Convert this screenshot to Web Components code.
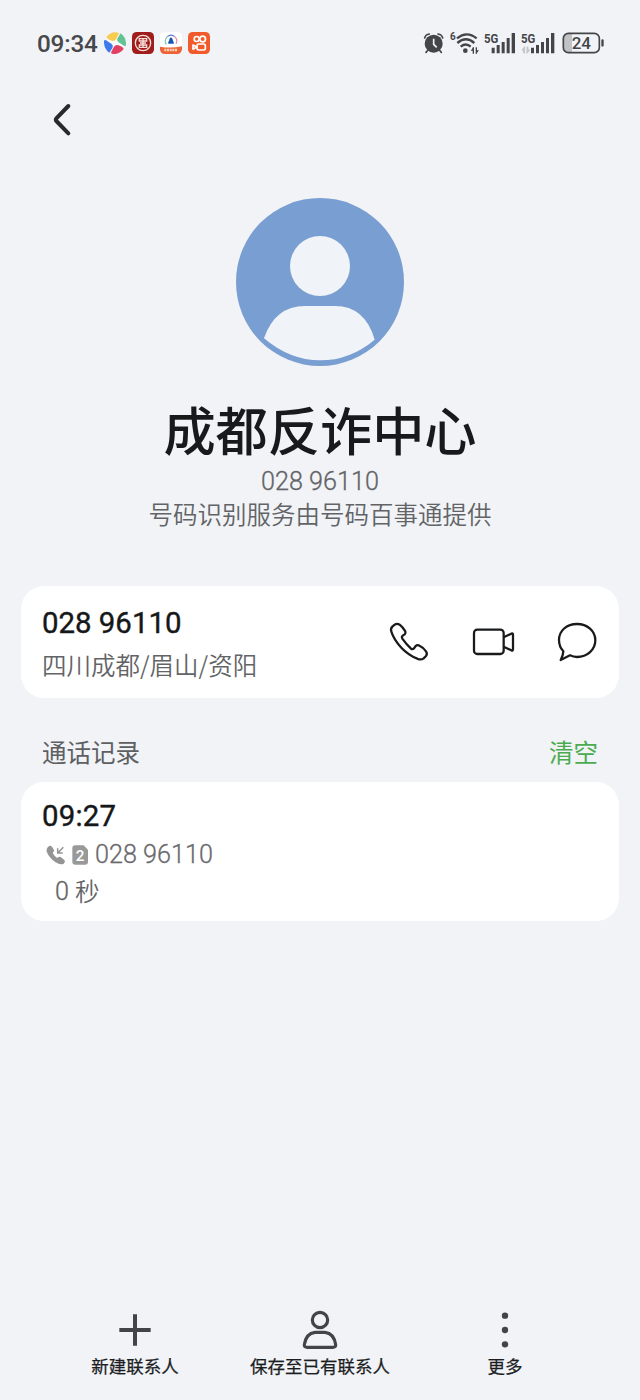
<!DOCTYPE html>
<html lang="zh-CN">
<head>
<meta charset="utf-8">
<title>联系人详情</title>
<style>
html,body{margin:0;padding:0;background:#f1f3f7}
body{width:640px;height:1400px;overflow:hidden}
</style>
</head>
<body>
<contact-page></contact-page>
<script>
const BASE = `*{box-sizing:border-box}svg{display:block;flex:none}
.n{font-family:Roboto,"Noto Sans CJK SC",sans-serif}
.c{font-family:"Noto Sans CJK SC",sans-serif}`;
function define(name, css, html) {
  const t = document.createElement('template');
  t.innerHTML = `<style>${BASE}${css}</style>${html}`;
  customElements.define(name, class extends HTMLElement {
    constructor() {
      super();
      this.attachShadow({mode: 'open'}).append(t.content.cloneNode(true));
    }
  });
}

define('status-bar', `
:host{display:flex;height:86px;padding:0 35px 0 37px;align-items:center}
time{width:67px;padding-top:1px;font-size:24.3px;font-weight:500;color:#47484b;line-height:30px;letter-spacing:-.2px}
.apps{display:flex;gap:6px}
.sys{display:flex;margin-left:auto;gap:4px;color:#444548}
.sys svg:last-child{margin-left:1px}
text{font-family:Roboto,sans-serif;font-weight:700}
`, `
<time class="n">09:34</time>
<div class="apps">
<svg width="22" height="22" viewBox="0 0 66 66"><circle cx="33" cy="33" r="25" fill="#f8fafc"/><path d="M7 15Q22-4 43 2Q46 3 44 6L36 22Q31 29 23 26Q10 22 7 15Z" fill="#f7cc50"/><path d="M50 4Q67 16 66 39Q64 44 60 41L44 31Q37 26 41 18Z" fill="#62c393"/><path d="M59 51Q44 70 24 65Q20 63 22 59L30 44Q35 37 43 40Q56 44 59 51Z" fill="#e33f61"/><path d="M16 62Q-1 50 0 27Q2 22 6 25L22 35Q29 40 25 48Z" fill="#3f79ee"/></svg>
<svg width="22" height="22" viewBox="0 0 66 66"><rect width="66" height="66" rx="14" fill="#9f1d1c"/><g fill="none" stroke="#f8dfd7" stroke-width="4"><circle cx="33" cy="33" r="23"/><path d="M22 20H44V27H22ZM22 46H44V39H22ZM33 20V46M24 33H42"/></g></svg>
<svg width="22" height="22" viewBox="0 0 66 66"><rect width="66" height="66" rx="14" fill="#fff"/><g fill="none" stroke-width="3.500"><path d="M19 37A17 17 0 0 1 22 14" stroke="#7bc9a3"/><path d="M22 14A17 17 0 0 1 44 14" stroke="#536ed1"/><path d="M44 14A17 17 0 0 1 48 35" stroke="#e985a5"/></g><path d="M33 16Q28 19 27 26Q23 31 25 35H41Q43 31 39 26Q38 19 33 16Z" fill="#1756b4"/><path d="M0 44Q33 50 66 43V52Q64 66 52 66H14Q3 66 0 53Z" fill="#eb6337"/><path d="M13 54H53" stroke="#ffd4b4" stroke-width="7" stroke-dasharray="6 2"/></svg>
<svg width="22" height="22" viewBox="0 0 66 66"><rect width="66" height="66" rx="14" fill="#f15b2c"/><g fill="none" stroke="#fff" stroke-width="5" stroke-linejoin="round"><circle cx="26" cy="21" r="7.500"/><circle cx="44" cy="21" r="8.500"/><rect x="27" y="36" width="25" height="18" rx="5"/><path d="M26 45L15 39V52Z"/></g></svg>
</div>
<div class="sys">
<svg width="22" height="24" viewBox="39 33 66 72" fill="none" stroke="currentColor"><circle cx="71" cy="71" r="27" fill="currentColor" stroke="none"/><path d="M44 54Q46 44 58 42M84 42Q96 44 98 54M54 90L48 97M88 90L94 97" stroke-width="5" stroke-linecap="round"/><path d="M71 56V73L80 82" stroke="#f1f3f7" stroke-width="5"/></svg>
<svg width="30" height="24" viewBox="117 33 90 72" fill="none" stroke="currentColor" stroke-width="7"><text x="120" y="60" font-size="33" textLength="17" lengthAdjust="spacingAndGlyphs" fill="currentColor" stroke="none">6</text><path d="M141 55Q170 31 200 55M142 69Q168 47 193 69M152 80Q168 67 182 80"/><circle cx="166" cy="92" r="7" fill="currentColor" stroke="none"/><path d="M190 82V101M199 82V101" stroke-width="4"/><path d="M182 92L190 82V92ZM207 91L199 101V91Z" fill="currentColor" stroke="none"/></svg>
<svg width="33" height="24" viewBox="219 33 99 72" fill="currentColor"><text x="222" y="68" font-size="41" textLength="43" lengthAdjust="spacingAndGlyphs">5G</text><path d="M245 83h9v17h-9zM260 75h9v25h-9zM275 66h9v34h-9zM290 54h9v46h-9zM305 39h10v61h-10z"/></svg>
<svg width="37" height="24" viewBox="330 33 111 72" fill="currentColor"><text x="333" y="68" font-size="41" textLength="43" lengthAdjust="spacingAndGlyphs">5G</text><path d="M363 83h9v17h-9zM378 75h9v25h-9zM393 66h9v34h-9zM408 54h9v46h-9zM423 39h10v61h-10z"/><path d="M336 90L344 80V99H341V90ZM359 90L351 100V81H354V90Z" fill="#c3c4c8" stroke="#c3c4c8" stroke-width="3"/></svg>
<svg width="43" height="24" viewBox="456 33 129 72"><path d="M486 41H474Q461 41 461 54V84Q461 97 474 97H486Z" fill="#c1c2c6"/><rect x="460" y="40" width="108" height="58" rx="15" fill="none" stroke="currentColor" stroke-width="5"/><rect x="574" y="58" width="7" height="22" rx="3.5" fill="currentColor"/><text x="514" y="87" text-anchor="middle" font-size="51" fill="currentColor" style="font-weight:500">24</text></svg>
</div>`);

define('top-bar', `:host{display:flex;height:68px;padding:0 43px;align-items:center}`,
`<svg width="40" height="40" viewBox="39 30 120 120" fill="none" stroke="#28292c" stroke-width="12" stroke-linecap="round" stroke-linejoin="round"><path d="M115 48L79 85Q76 89 79 93L115 130"/></svg>`);

define('contact-hero', `
:host{display:flex;flex-direction:column;align-items:center;padding-top:44px}
h1{margin:32px 0 0;font-size:52.2px;line-height:60px;font-weight:500;color:#18191b}
.num{margin-top:9px;font-size:25.2px;line-height:30px;font-weight:300;-webkit-text-stroke:.3px;color:#626366}
.src{margin-top:2px;font-size:24.5px;line-height:30px;font-weight:350;color:#626366}
`, `
<svg width="168" height="168" viewBox="48 39 504 504"><circle cx="300" cy="291" r="252" fill="#799ed1"/><circle cx="300" cy="243" r="90" fill="#f0f4f9"/><path d="M132 460Q165 363 255 363H345Q435 363 464 464Q390 526 300 526Q210 526 132 460Z" fill="#f0f4f9"/></svg>
<h1 class="c"><slot name="name"></slot></h1>
<div class="num n"><slot name="number"></slot></div>
<div class="src c"><slot name="source"></slot></div>`);

define('phone-card', `
:host{display:flex;height:112px;margin:57px 21px 0;padding:0 20px 0 21px;border-radius:23px;background:#fff;align-items:center;justify-content:space-between}
.info{padding-top:3px}
.num{font-size:29.4px;line-height:36px;font-weight:400;-webkit-text-stroke:.4px;color:#161718}
.loc{font-size:24.5px;line-height:34px;margin-top:7px;font-weight:340;color:#636466}
.actions{display:flex;gap:40px}
`, `
<div class="info"><div class="num n"><slot name="number"></slot></div><div class="loc c"><slot name="place"></slot></div></div>
<div class="actions">
<svg width="44" height="44" viewBox="51 135 132 132" fill="none" stroke="#191a1c" stroke-width="6.8" stroke-linejoin="round"><path d="M67 155L74 149Q81 144 89 149Q99 157 106 169Q108 174 104 178L98 182Q94 186 97 191Q109 208 123 221Q128 224 132 220L137 213Q141 209 146 211Q159 217 168 229Q173 236 168 243L161 250Q153 256 142 251Q115 240 94 218Q72 195 64 170Q61 161 67 155Z"/></svg>
<svg width="44" height="44" viewBox="303 135 132 132" fill="none" stroke="#191a1c" stroke-width="6.8" stroke-linejoin="round"><rect x="312" y="164" width="89" height="73" rx="10"/><path d="M401 187L424 176Q429 174 429 179V223Q429 228 424 226L401 215"/></svg>
<svg width="44" height="44" viewBox="555 135 132 132" fill="none" stroke="#191a1c" stroke-width="6.8" stroke-linejoin="round"><path d="M580 229Q567 215 567 195C567 167 590 147 621 147S676 168 676 196S652 246 621 246Q610 246 600 241L572 255Q579 243 580 229Z"/></svg>
</div>`);

define('section-header', `
:host{display:flex;justify-content:space-between;margin:37px 42px 0;font-size:24.5px;line-height:34px;color:#5e5f63}
.a{color:#4aab50}`, `<span class="c"><slot></slot></span><span class="a c"><slot name="action"></slot></span>`);

define('call-record', `
:host{display:block;height:139px;margin:13px 21px 0;padding:16px 21px 0;border-radius:23px;background:#fff}
.t{font-size:29.4px;line-height:36px;font-weight:400;-webkit-text-stroke:.4px;color:#161718;letter-spacing:.2px}
.r{display:flex;align-items:center;height:30px;margin-top:6px;font-size:25.2px;line-height:30px;font-weight:300;-webkit-text-stroke:.3px;color:#69696c}
.r svg{margin-left:4px;-webkit-text-stroke:0}.r svg+svg{margin:0 6px 0 6px}
.d{display:flex;align-items:center;gap:6px;margin-top:6px;padding-left:13px;height:30px;line-height:30px;font-size:25.2px;color:#626365}
.d .n{font-weight:300;-webkit-text-stroke:.3px;padding-top:1px}
.d .c{font-size:24.5px;font-weight:350}
`, `
<div class="t n"><slot name="time"></slot></div>
<div class="r n">
<svg width="20" height="20" viewBox="108 372 60 60"><path d="M112 380Q119 371 126 377L132 387Q133 392 128 396Q133 406 142 411Q148 405 153 409L163 417Q167 422 161 428Q151 433 137 424Q118 411 110 392Q109 384 112 380Z" fill="#949494"/><path d="M160 379L143 396M143 382V396H158" fill="none" stroke="#949494" stroke-width="4.5"/></svg>
<svg width="17" height="20" viewBox="187 372 51 60"><path d="M197 373H222L235 386V422Q235 431 226 431H197Q188 431 188 422V382Q188 373 197 373Z" fill="#999"/><text x="211.500" y="419" text-anchor="middle" font-family="Roboto,sans-serif" font-weight="500" font-size="46" fill="#fff">2</text></svg>
<span><slot name="number"></slot></span></div>
<div class="d"><span class="n"><slot name="amount"></slot></span><span class="c"><slot name="unit"></slot></span></div>`);

define('nav-item', `
:host{display:flex;flex-direction:column;align-items:center;width:185px}
.l{margin-top:2px;font-size:17.5px;line-height:24px;font-weight:400;-webkit-text-stroke:.25px;color:#1c1d1f;white-space:nowrap}`,
`<slot name="icon"></slot><div class="l c"><slot></slot></div>`);

define('bottom-nav', `:host{display:flex;justify-content:center;margin-top:auto;padding-bottom:22px}`, `
<nav-item><svg slot="icon" width="44" height="44" viewBox="129 39 132 132"><path d="M195 58V152M148 105H242" stroke="#434447" stroke-width="12"/></svg>新建联系人</nav-item>
<nav-item><svg slot="icon" width="44" height="44" viewBox="684 39 132 132" fill="none" stroke="#434447" stroke-width="9.500"><circle cx="750" cy="75" r="23"/><path d="M735 112H765Q792 115 797 149Q798 157 788 157H712Q702 157 703 149Q708 115 735 112Z"/></svg>保存至已有联系人</nav-item>
<nav-item><svg slot="icon" width="44" height="44" viewBox="99 39 132 132" fill="#434447"><circle cx="165" cy="62" r="9.500"/><circle cx="165" cy="105" r="9.500"/><circle cx="165" cy="148" r="9.500"/></svg>更多</nav-item>`);

define('contact-page', `:host{display:flex;flex-direction:column;width:640px;height:1400px;background:#f1f3f7}`, `
<status-bar></status-bar>
<top-bar></top-bar>
<contact-hero><span slot="name">成都反诈中心</span><span slot="number">028 96110</span><span slot="source">号码识别服务由号码百事通提供</span></contact-hero>
<phone-card><span slot="number">028 96110</span><span slot="place">四川成都/眉山/资阳</span></phone-card>
<section-header>通话记录<span slot="action">清空</span></section-header>
<call-record><span slot="time">09:27</span><span slot="number">028 96110</span><span slot="amount">0</span><span slot="unit">秒</span></call-record>
<bottom-nav></bottom-nav>`);
</script>
</body>
</html>
